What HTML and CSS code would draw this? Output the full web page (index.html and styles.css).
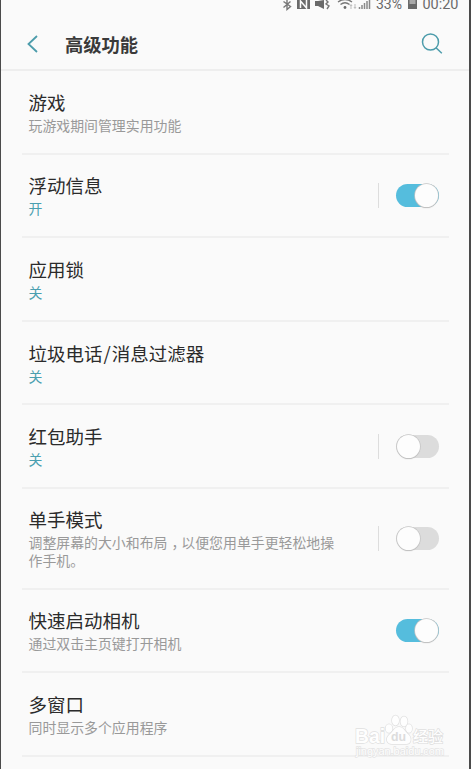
FILE: index.html
```html
<!DOCTYPE html>
<html lang="zh-CN">
<head>
    <meta charset="UTF-8">
    <meta name="viewport" content="width=device-width, initial-scale=1.0">
    <title>高级功能</title>
    <link rel="stylesheet" href="styles.css">
</head>
<body>

<div class="screen">
    <!-- Status bar -->
    <svg class="status-bar" width="190" height="12" viewBox="0 0 190 12">
        <g class="status-line">
            <path d="M3.500 1.500 L10.500 6.500 L7 9.500 V0 M3.500 7.500 L10.500 1.500"/>
            <path d="M46 0 L48 2 L46 4 L49 6 L47 9"/>
            <path d="M58 2 Q65 -3 72 2 M60.500 4.500 Q65 1 69.500 4.500"/>
        </g>
        <path class="status-fill" d="M17 0 H30 V9 H17 Z M35 1 H38 L44 0 V9 L38 6 H35 Z"/>
        <path class="nfc-mark" d="M20.500 8 V1 L26.500 8 V0"/>
        <circle class="status-fill" cx="65" cy="7.500" r="1.400"/>
        <path class="status-pale" d="M71 5 V9 M70 6 L71 4.500 L72 6 M75 4 V8 M74 7 L75 8.500 L76 7"/>
        <path class="signal" d="M79.500 9 V7 M82 9 V5 M84.500 9 V3 M87 9 V1 M89.500 9 V0"/>
        <text class="status-text" x="96" y="9" textLength="26" lengthAdjust="spacingAndGlyphs">33%</text>
        <path class="status-fill" d="M128 0 H137 V9 H128 Z"/>
        <path class="battery-empty" d="M129.500 0 H135.500 V4 H129.500 Z"/>
        <text class="status-text" x="142.500" y="9" textLength="36" lengthAdjust="spacingAndGlyphs">00:20</text>
    </svg>

    <header class="header">
        <svg class="back" width="12" height="20" viewBox="0 0 12 20">
            <path d="M11 2 L2.500 10 L11 18"/>
        </svg>
        <h1>高级功能</h1>
        <svg class="search" width="22" height="22" viewBox="0 0 22 22">
            <circle cx="9.500" cy="9" r="8"/>
            <path d="M15 14.800 L20.800 20.300"/>
        </svg>
    </header>

    <ul class="settings">
        <li class="item">
            <div class="text">
                <h2>游戏</h2>
                <p>玩游戏期间管理实用功能</p>
            </div>
        </li>
        <li class="item">
            <div class="text">
                <h2>浮动信息</h2>
                <p class="state">开</p>
            </div>
            <div class="control divided"><span class="switch on"></span></div>
        </li>
        <li class="item">
            <div class="text">
                <h2>应用锁</h2>
                <p class="state">关</p>
            </div>
        </li>
        <li class="item">
            <div class="text">
                <h2>垃圾电话<span class="slash">/</span>消息过滤器</h2>
                <p class="state">关</p>
            </div>
        </li>
        <li class="item">
            <div class="text">
                <h2>红包助手</h2>
                <p class="state">关</p>
            </div>
            <div class="control divided"><span class="switch"></span></div>
        </li>
        <li class="item tall">
            <div class="text">
                <h2>单手模式</h2>
                <p>调整屏幕的大小和布局<span class="comma">，</span>以便您用单手更轻松地操<br>作手机。</p>
            </div>
            <div class="control divided"><span class="switch"></span></div>
        </li>
        <li class="item">
            <div class="text">
                <h2>快速启动相机</h2>
                <p>通过双击主页键打开相机</p>
            </div>
            <div class="control"><span class="switch on"></span></div>
        </li>
        <li class="item">
            <div class="text">
                <h2>多窗口</h2>
                <p>同时显示多个应用程序</p>
            </div>
        </li>
    </ul>

    <!-- Watermark -->
    <svg class="watermark" width="96" height="48" viewBox="0 0 96 48">
        <text class="mark-latin" x="4" y="29" textLength="30" lengthAdjust="spacingAndGlyphs">Bai</text>
        <g class="paw">
            <ellipse cx="38" cy="14.500" rx="3.300" ry="4.300"/>
            <ellipse cx="44.500" cy="6.500" rx="3.500" ry="5"/>
            <ellipse cx="53" cy="7.500" rx="3.500" ry="5"/>
            <ellipse cx="58" cy="14.500" rx="3" ry="4.300"/>
            <path d="M48 13 C43 13 42 18 38 21 C34 25 36 30 41 30 H55 C60 30 61 25 58 21 C54 18 53 13 48 13 Z"/>
        </g>
        <text class="mark-du" x="40" y="27" textLength="15" lengthAdjust="spacingAndGlyphs">du</text>
        <text class="mark-cn" x="62" y="28" textLength="30">经验</text>
        <text class="mark-url" x="5" y="41" textLength="88">jingyan.baidu.com</text>
    </svg>
</div>

</body>
</html>
```
FILE: styles.css
```css
* {
    box-sizing: border-box;
}
body {
    margin: 0;
    background-color: #fafafa;
    font-family: "Noto Sans CJK SC", sans-serif;
    color: #2b2b2b;
}
.screen {
    position: relative;
    height: 769px;
    overflow: hidden;
    border-left: 1px solid #4b4b4b;
    border-right: 2px solid #4b4b4b;
}
h1, h2, p, ul {
    margin: 0;
    padding: 0;
}

/* status bar */
.status-bar {
    display: block;
    margin-left: 279px;
}
.status-line {
    fill: none;
    stroke: #777;
    stroke-width: 1.4;
}
.status-fill {
    fill: #6a6a6a;
}
.nfc-mark {
    fill: none;
    stroke: #fafafa;
    stroke-width: 1.5;
}
.status-pale {
    fill: none;
    stroke: #bbb;
}
.signal {
    stroke: #888;
    stroke-width: 1.5;
}
.battery-empty {
    fill: #aaa;
}
.status-text {
    font-family: Roboto, sans-serif;
    font-size: 15.5px;
    fill: #6a6a6a;
}

/* header */
.header {
    display: flex;
    align-items: center;
    height: 59px;
    padding: 6px 26px 0 25px;
    border-bottom: 2px solid #eee;
}
.header h1 {
    flex: 1;
    margin-left: 27px;
    font-size: 18.3px;
    font-weight: 700;
    line-height: 24px;
    color: #3a3a3a;
}
.back, .search {
    fill: none;
    stroke: #4c9cab;
    stroke-width: 1.8;
}
.search {
    stroke-width: 1.5;
}

/* list */
.settings {
    list-style: none;
    margin: 0 20px 0 21px;
}
.item {
    display: flex;
    justify-content: space-between;
    align-items: center;
    height: 83.6px;
    padding: 0 10px 0 6.5px;
    border-bottom: 2px solid #f0f0f0;
}
.item.tall {
    height: 100.6px;
}
.text h2 {
    font-size: 18.5px;
    font-weight: 400;
    line-height: 25px;
    margin-bottom: 1px;
}
.text p {
    font-size: 13.9px;
    line-height: 18px;
    color: #999;
    white-space: nowrap;
}
.text .state {
    color: #4a9fb0;
}
.slash {
    margin: 0 1px;
}
.comma {
    padding-left: 4px;
    margin-right: -4px;
}
.control {
    display: flex;
    align-items: center;
    height: 25px;
    padding-left: 17px;
}
.divided {
    border-left: 1px solid #ddd;
}
.switch {
    display: flex;
    align-items: center;
    width: 43px;
    height: 23px;
    padding: 0 0.7px;
    border-radius: 12px;
    background-color: #dcdcdc;
}
.switch::before {
    content: "";
    flex: none;
    width: 23px;
    height: 23px;
    border-radius: 50%;
    background-color: #fdfdfd;
    box-shadow: 0 0 0 0.7px #c4c4c4, 0 1px 1px #bbb;
}
.switch.on {
    justify-content: flex-end;
    background-color: #55bddd;
}

/* watermark */
.watermark {
    position: absolute;
    left: 350px;
    top: 714px;
    font-family: "Liberation Sans", "Noto Sans CJK SC", sans-serif;
}
.watermark text, .paw {
    fill: #fefefe;
    stroke: #dfdfdf;
    stroke-width: 1.4;
    paint-order: stroke;
}
.mark-latin {
    font-size: 21px;
    font-weight: 700;
}
.watermark .mark-du {
    font-size: 13px;
    font-weight: 700;
    fill: #dcdcdc;
    stroke: none;
}
.mark-cn {
    font-size: 15px;
    font-weight: 500;
}
.watermark .mark-url {
    font-size: 11px;
    stroke: #e4e4e4;
}
```
